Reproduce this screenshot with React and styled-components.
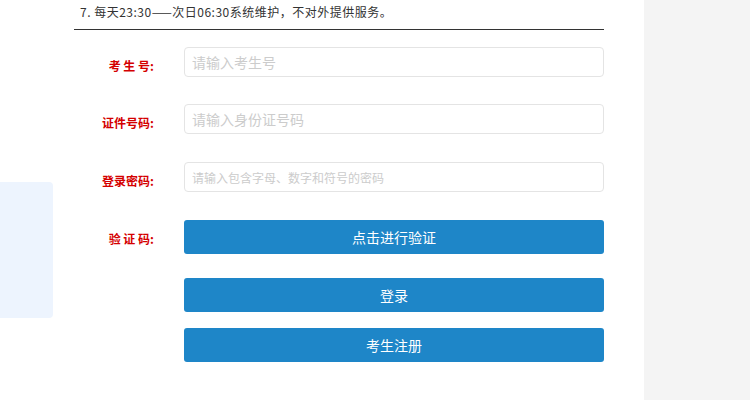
import styled, { createGlobalStyle } from "styled-components";

const GlobalStyle = createGlobalStyle`
  html, body {
    margin: 0;
    padding: 0;
    background: #ffffff;
    font-family: "Noto Sans CJK SC", "Microsoft YaHei", "Noto Sans", sans-serif;
  }
`;

const Page = styled.div`
  display: flex;
  width: 750px;
  height: 400px;
  overflow: hidden;
`;

const Main = styled.div`
  display: flex;
  width: 644px;
  background: #ffffff;
`;

const LeftCol = styled.div`
  width: 74px;
  flex-shrink: 0;
`;

const InfoPanel = styled.div`
  margin-top: 182px;
  width: 53px;
  height: 136px;
  background: #edf4fe;
  border-radius: 0 4px 4px 0;
`;

const Content = styled.div`
  width: 530px;
`;

const Notice = styled.div`
  height: 29px;
  padding-left: 6px;
  line-height: 24px;
  font-size: 12px;
  letter-spacing: 0.5px;
  color: #333333;
  border-bottom: 1px solid #333333;
`;

const Form = styled.form`
  display: flex;
  flex-direction: column;
  padding-top: 17px;
`;

const Row = styled.div`
  display: flex;
  align-items: flex-start;
  margin-top: ${(p) => p.$mt || 0}px;
`;

const Label = styled.label`
  width: 80px;
  flex-shrink: 0;
  margin-right: 30px;
  padding-top: 9px;
  line-height: 20px;
  text-align: right;
  font-size: 12px;
  font-weight: bold;
  color: #d40000;
  white-space: pre;
`;

const Input = styled.input`
  box-sizing: border-box;
  width: 420px;
  height: 30px;
  padding: 0 7px;
  border: 1px solid #e4e4e4;
  border-radius: 4px;
  outline: none;
  font-family: inherit;
  font-size: ${(p) => p.$fs || 14}px;
  color: #333;
  &::placeholder {
    color: #cccccc;
  }
`;

const Button = styled.button`
  box-sizing: border-box;
  width: 420px;
  height: 34px;
  border: none;
  border-radius: 3px;
  background: #1e86c8;
  color: #ffffff;
  font-family: inherit;
  font-size: 14px;
  cursor: pointer;
  margin-left: ${(p) => (p.$indent ? 110 : 0)}px;
`;

const Side = styled.div`
  flex: 1;
  background: #f4f4f4;
`;

export default function App() {
  return (
    <>
      <GlobalStyle />
      <Page>
        <Main>
          <LeftCol>
            <InfoPanel />
          </LeftCol>
          <Content>
            <Notice>7. 每天23:30——次日06:30系统维护，不对外提供服务。</Notice>
            <Form onSubmit={(e) => e.preventDefault()}>
              <Row>
                <Label>{"考 生 号:"}</Label>
                <Input placeholder="请输入考生号" />
              </Row>
              <Row $mt={27}>
                <Label>证件号码:</Label>
                <Input placeholder="请输入身份证号码" />
              </Row>
              <Row $mt={28}>
                <Label>登录密码:</Label>
                <Input type="password" $fs={12} placeholder="请输入包含字母、数字和符号的密码" />
              </Row>
              <Row $mt={28}>
                <Label>{"验 证 码:"}</Label>
                <Button type="button">点击进行验证</Button>
              </Row>
              <Row $mt={24}>
                <Button $indent type="submit">登录</Button>
              </Row>
              <Row $mt={16}>
                <Button $indent type="button">考生注册</Button>
              </Row>
            </Form>
          </Content>
        </Main>
        <Side />
      </Page>
    </>
  );
}
